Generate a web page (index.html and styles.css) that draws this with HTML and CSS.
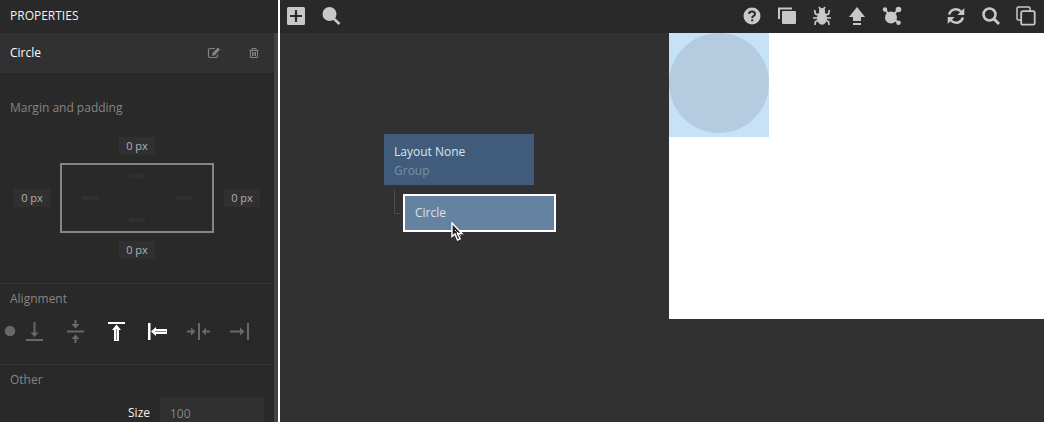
FILE: index.html
```html
<!DOCTYPE html>
<html lang="en">
<head>
<meta charset="utf-8">
<title>Node editor</title>
<link rel="stylesheet" href="styles.css">
</head>
<body>
<div class="app">
  <aside class="sidebar">
    <h1 class="sidebar-title">PROPERTIES</h1>
    <div class="scroller">
      <header class="node-header">
        <h2 class="node-name">Circle</h2>
        <button class="ghost" aria-label="Rename">
          <svg width="14" height="14" viewBox="0 0 14 14" fill="none" stroke="currentColor"><path d="M8 2.500H3Q1.500 2.500 1.500 4V10Q1.500 11.500 3 11.500H9Q10.500 11.500 10.500 10V8.500" stroke-width="1.200"/><path d="M5 10L5.500 7L11 1.500L13 3.500L7.800 9.200Z" fill="currentColor" stroke="none"/></svg>
        </button>
        <button class="ghost" aria-label="Delete">
          <svg width="14" height="14" viewBox="0 0 14 14" fill="none" stroke="currentColor"><path d="M2.500 4.500H11.500M5 4V2.500H9V4M3.500 4.500V11.500H10.500V4.500M5.500 6V10M7 6V10M8.500 6V10"/></svg>
        </button>
      </header>
      <section class="group spacing">
        <h3 class="group-title">Margin and padding</h3>
        <div class="box-model">
          <button class="value top">0 px</button>
          <button class="value left">0 px</button>
          <div class="box">
            <button class="pad pad-top" aria-label="Padding top"></button>
            <button class="pad pad-left" aria-label="Padding left"></button>
            <button class="pad pad-right" aria-label="Padding right"></button>
            <button class="pad pad-bottom" aria-label="Padding bottom"></button>
          </div>
          <button class="value right">0 px</button>
          <button class="value bottom">0 px</button>
        </div>
      </section>
      <section class="group alignment">
        <h3 class="group-title">Alignment</h3>
        <div class="align-row">
          <svg class="dot" width="14" height="24" viewBox="0 0 14 24" fill="currentColor"><circle cx="10" cy="12" r="5.200"/></svg>
          <button class="align" aria-label="Align bottom"><svg width="41" height="24" viewBox="0 0 41 24" fill="currentColor"><path d="M12 20H29V22H12ZM19.500 3H21.500V13.500H24.500L20.500 18L16.500 13.500H19.500Z"/></svg></button>
          <button class="align" aria-label="Align middle"><svg width="41" height="24" viewBox="0 0 41 24" fill="currentColor"><path d="M12 11.500H29V13.500H12ZM19.500 1H21.500V5H24.500L20.500 9.500L16.500 5H19.500ZM19.500 24H21.500V20H24.500L20.500 15.500L16.500 20H19.500Z"/></svg></button>
          <button class="align active" aria-label="Align top"><svg width="41" height="24" viewBox="0 0 41 24" fill="currentColor"><path d="M12 3H29V5H12ZM20.500 5.500L25 11H23V22H18V11H16Z"/><path d="M20.500 10V21" stroke="#888"/></svg></button>
          <button class="align active" aria-label="Align left"><svg width="41" height="24" viewBox="0 0 41 24" fill="currentColor"><path d="M11 4H13.500V21H11ZM14 12.500L19 8V10H30V15H19V17Z"/><path d="M18 12.500H29" stroke="#888"/></svg></button>
          <button class="align" aria-label="Align center"><svg width="41" height="24" viewBox="0 0 41 24" fill="currentColor"><path d="M20 4H22V21H20ZM9 11.500H13V8.500L17.500 12.500L13 16.500V13.500H9ZM32 11.500H28V8.500L24 12.500L28 16.500V13.500H32Z"/></svg></button>
          <button class="align" aria-label="Align right"><svg width="41" height="24" viewBox="0 0 41 24" fill="currentColor"><path d="M28 4H30V21H28ZM11 11.500H21V8.500L25.500 12.500L21 16.500V13.500H11Z"/></svg></button>
        </div>
      </section>
      <section class="group other">
        <h3 class="group-title">Other</h3>
        <div class="field">
          <label class="field-label" for="size">Size</label>
          <input class="field-input" id="size" type="text" value="100">
        </div>
      </section>
    </div>
  </aside>
  <main class="main">
    <nav class="toolbar">
      <button class="tool" aria-label="Add node"><svg width="20" height="20" viewBox="0 0 20 20"><rect x="1" y="1" width="18" height="18" rx="1.500" fill="currentColor"/><path d="M10 4V16M4 10H16" stroke="#2a2a2a" stroke-width="2.200"/></svg></button>
      <button class="tool" aria-label="Search"><svg width="20" height="20" viewBox="0 0 20 20"><circle cx="8.500" cy="8" r="7" fill="currentColor"/><path d="M12 12L18.500 18" stroke="currentColor" stroke-width="2.600"/></svg></button>
      <span class="spacer"></span>
      <button class="tool" aria-label="Help"><svg width="20" height="20" viewBox="0 0 20 20"><circle cx="10" cy="10" r="8.500" fill="currentColor"/><path d="M7 7.800Q7.300 5.500 10 5.500Q13 5.500 13 8Q13 9.300 11.300 10.200Q10.200 10.800 10.200 12M10.200 13.300V15.300" fill="none" stroke="#2a2a2a" stroke-width="2"/></svg></button>
      <button class="tool" aria-label="Components"><svg width="20" height="20" viewBox="0 0 20 20"><path d="M2 13V2.500H15" fill="none" stroke="currentColor" stroke-width="2"/><rect x="5" y="5" width="14" height="13" rx="1" fill="currentColor"/></svg></button>
      <button class="tool" aria-label="Debug"><svg width="20" height="20" viewBox="0 0 20 20"><ellipse cx="10" cy="12" rx="5" ry="6.800" fill="currentColor"/><circle cx="10" cy="5" r="3" fill="currentColor"/><path d="M7 1L9 4M13 1L11 4M6.500 9L3.500 8L2.500 4M13.500 9L16.500 8L17.500 4M6 12H1M14 12H19M6.500 14L3.500 15.500L3 19M13.500 14L16.500 15.500L17 19" fill="none" stroke="currentColor" stroke-width="1.700"/></svg></button>
      <button class="tool" aria-label="Deploy"><svg width="20" height="20" viewBox="0 0 20 20"><path d="M10 1L18 11H14V15H6V11H2ZM6 17H14V19H6Z" fill="currentColor"/></svg></button>
      <button class="tool" aria-label="Connections"><svg width="20" height="20" viewBox="0 0 20 20"><g fill="currentColor"><circle cx="9" cy="11.500" r="6"/><circle cx="3" cy="3.500" r="2.200"/><circle cx="16.500" cy="3.500" r="2.800"/><circle cx="16.500" cy="16.800" r="2.300"/></g><path d="M3 3.500L9 11L16.500 3.500M9 11.500L16.500 16.500" fill="none" stroke="currentColor" stroke-width="1.800"/></svg></button>
      <button class="tool refresh" aria-label="Refresh"><svg width="20" height="20" viewBox="0 0 20 20"><path d="M3 8.500Q5 3.200 10 3.200Q13 3.200 15.500 6M17 11.500Q15 16.800 10 16.800Q7 16.800 4.500 14" fill="none" stroke="currentColor" stroke-width="2.500"/><path d="M18.300 2V9H11.300ZM1.700 18V11H8.700Z" fill="currentColor"/></svg></button>
      <button class="tool" aria-label="Zoom"><svg width="20" height="20" viewBox="0 0 20 20" fill="none" stroke="currentColor"><circle cx="8.500" cy="8.500" r="6" stroke-width="2.600"/><path d="M13 13L18 18" stroke-width="3"/></svg></button>
      <button class="tool" aria-label="Duplicate"><svg width="20" height="20" viewBox="0 0 20 20" fill="none" stroke="currentColor" stroke-width="1.500"><path d="M5 14H2.500Q1 14 1 12.500V2.500Q1 1 2.500 1H12.500Q14 1 14 2.500V5"/><rect x="5.200" y="5.200" width="13.500" height="13.500" rx="1.500" stroke-width="1.800"/></svg></button>
    </nav>
    <div class="workspace">
      <div class="canvas">
        <div class="node group-node"><span>Layout None</span><span class="node-type">Group</span></div>
        <div class="link"></div>
        <div class="node circle-node"><span>Circle</span></div>
        <svg class="cursor" width="16" height="20" viewBox="0 0 16 20"><path d="M2 1V14.500L5 12L7.500 18L10 16.800L7.500 11.500H12Z" fill="#222" stroke="#fff" stroke-width="1.400"/><path d="M5 8L11 14M7 12L11 17" stroke="#fff" stroke-dasharray="2 1"/></svg>
      </div>
      <div class="preview"><div class="highlight"><div class="circle"></div></div></div>
    </div>
  </main>
</div>
</body>
</html>
```
FILE: styles.css
```css
* { box-sizing: border-box; }
body { margin: 0; background: #313131; color: #ddd; font: 12px/18px "Open Sans", "Noto Sans", sans-serif; }
button { border: 0; padding: 0; margin: 0; background: none; color: inherit; font: inherit; }
svg { display: block; }
h1, h2, h3 { margin: 0; font: inherit; }

.app { display: flex; height: 100vh; overflow: hidden; }
.sidebar { display: flex; flex-direction: column; flex: 0 0 280px; background: #292929; border-right: 2px solid #fff; }
.sidebar-title { height: 33px; flex: none; padding: 7px 10px; color: #f2f2f2; }
.scroller { flex: 1; min-height: 0; overflow: hidden; border-right: 4px solid #434343; }
.node-header { display: flex; align-items: center; gap: 26px; height: 40px; padding: 0 13px 0 10px; background: #313131; }
.node-name { flex: 1; color: #fff; }
.ghost { color: #858585; }
.group { border-bottom: 1px solid #333; }
.group-title { padding: 0 10px; color: #858585; }
.spacing { padding: 26px 0 24px; }
.box-model { display: grid; grid-template-columns: 36px 154px 36px; grid-template-rows: 18px 70px 18px; gap: 8px 10px; align-items: center; justify-items: center; justify-content: center; padding-top: 20px; }
.value { width: 36px; height: 18px; background: #303030; color: #b0b0b0; font-size: 11px; }
.top { grid-area: 1 / 2; }
.left { grid-area: 2 / 1; }
.right { grid-area: 2 / 3; }
.bottom { grid-area: 3 / 2; }
.box { display: grid; grid-area: 2 / 2; grid-template-columns: 56px 1fr 56px; grid-template-rows: 1fr 1fr 1fr; align-items: center; justify-items: center; width: 100%; height: 100%; border: 2px solid #858585; }
.pad { width: 16px; height: 4px; background: #303030; }
.pad-top { grid-area: 1 / 2; }
.pad-left { grid-area: 2 / 1; }
.pad-right { grid-area: 2 / 3; }
.pad-bottom { grid-area: 3 / 2; }
.alignment { padding: 6px 0 21px; }
.align-row { display: flex; padding-top: 11px; color: #686868; }
.dot { overflow: visible; }
.active { color: #fff; }
.other { padding-top: 6px; }
.field { display: flex; align-items: center; gap: 10px; padding: 8px 10px 0; }
.field-label { flex: 1; text-align: right; color: #f2f2f2; }
.field-input { width: 104px; height: 32px; padding: 0 10px; border: 0; background: #303030; color: #858585; font: inherit; }

.main { display: flex; flex-direction: column; flex: 1; min-width: 0; }
.toolbar { display: flex; align-items: center; flex: none; gap: 15px; height: 33px; padding: 0 8px 2px 6px; background: #292929; color: #c8c8c8; }
.spacer { flex: 1; }
.refresh { margin-left: 29px; }
.workspace { display: flex; flex: 1; min-height: 0; }
.canvas { position: relative; flex: 1; }
.node { position: absolute; color: #d9e4ee; line-height: 19px; }
.node span { display: block; }
.group-node { left: 104px; top: 101px; width: 150px; padding: 8px 10px 5px; background: #415c7a; }
.node .node-type { color: #7890a7; }
.circle-node { left: 123px; top: 161px; width: 153px; padding: 7px 10px 8px; border: 2px solid #fff; background: #6582a0; }
.link { position: absolute; left: 114px; top: 157px; width: 6px; height: 24px; border: solid #4c4c4c; border-width: 0 0 1px 1px; }
.cursor { position: absolute; left: 170px; top: 189px; }
.preview { width: 375px; height: 286px; background: #fff; }
.highlight { width: 100px; height: 104px; background: #c6e2f7; }
.circle { width: 100px; height: 100px; border-radius: 50%; background: #b5cce0; }
```
